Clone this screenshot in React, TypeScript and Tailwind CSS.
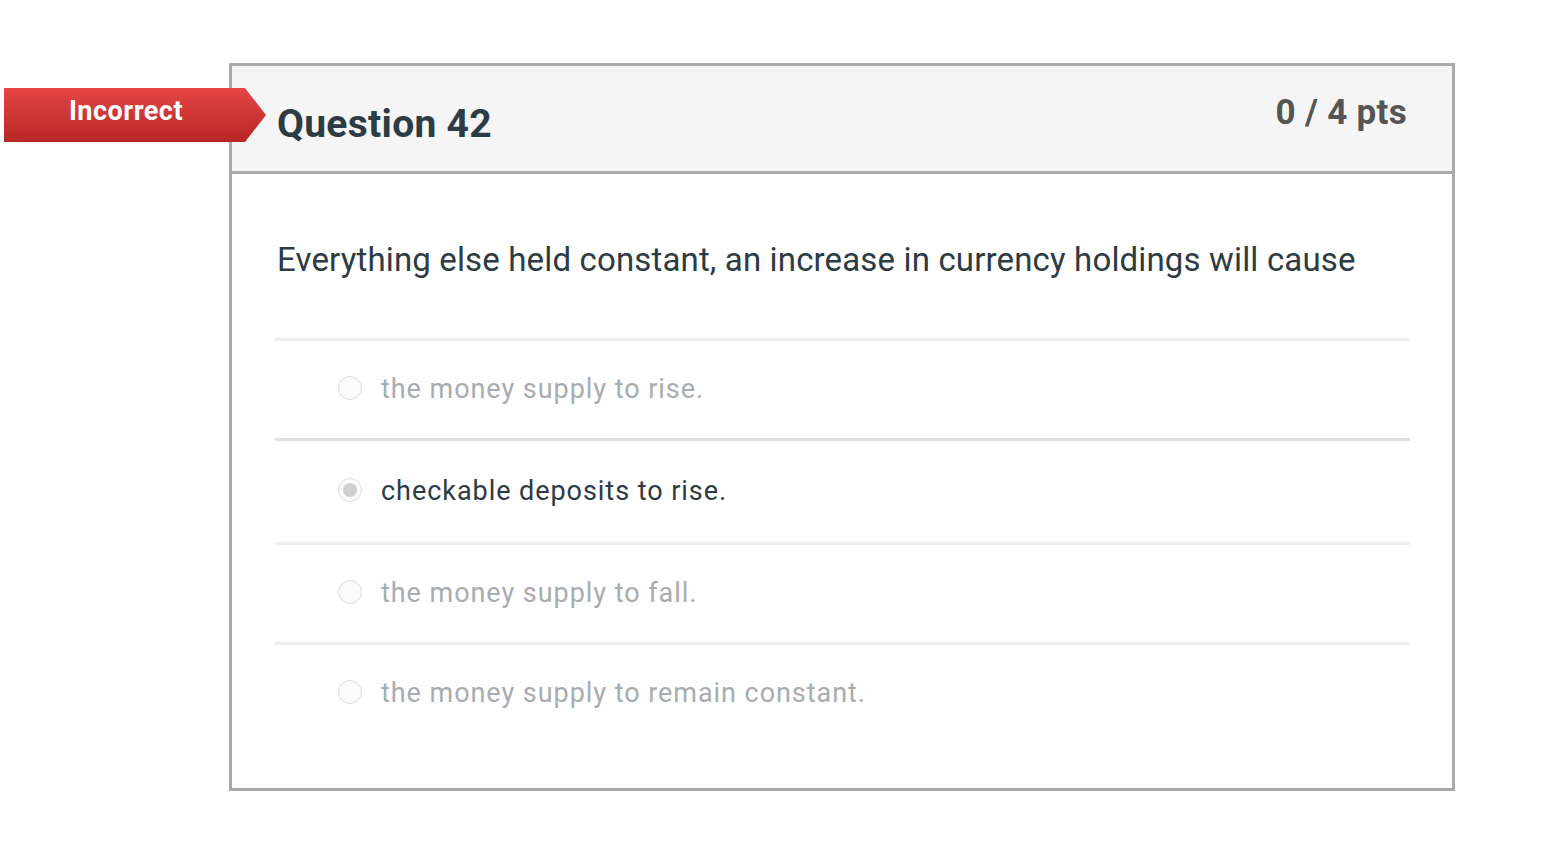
import React from "react";

type Answer = { text: string; selected?: boolean };

const answers: Answer[] = [
  { text: "the money supply to rise." },
  { text: "checkable deposits to rise.", selected: true },
  { text: "the money supply to fall." },
  { text: "the money supply to remain constant." },
];

function Radio({ selected }: { selected?: boolean }) {
  return (
    <span className="-mt-[4px] flex h-[24px] w-[24px] shrink-0 items-center justify-center rounded-full border border-[#dcdcdc] bg-[#fbfbfb]">
      {selected && <span className="h-[14px] w-[14px] rounded-full bg-[#cfcfcf]" />}
    </span>
  );
}

function IncorrectBadge() {
  return (
    <div className="absolute left-[-228px] top-[22px] flex h-[54px] items-center">
      <div className="flex h-full w-[241px] items-start justify-center bg-gradient-to-b from-[#e54545] to-[#b72525] pl-[3px] pt-[8px] text-[27px] font-bold leading-[30px] tracking-[0.5px] text-white">
        Incorrect
      </div>
      <svg width="21" height="54" viewBox="0 0 21 54" className="block">
        <defs>
          <linearGradient id="badgeGrad" x1="0" y1="0" x2="0" y2="1">
            <stop offset="0" stopColor="#e54545" />
            <stop offset="1" stopColor="#b72525" />
          </linearGradient>
        </defs>
        <polygon points="0,0 21,27 0,54" fill="url(#badgeGrad)" />
      </svg>
    </div>
  );
}

export default function App() {
  return (
    <div
      className="min-h-[848px] bg-white pl-[229px] pt-[63px]"
      style={{ fontFamily: "Roboto, 'Liberation Sans', sans-serif" }}
    >
      <div className="relative w-[1226px] border-[3px] border-[#aaaaaa] bg-white">
        <IncorrectBadge />
        {/* Header */}
        <div className="flex h-[108px] items-start justify-between border-b-[3px] border-[#aaaaaa] bg-[#f5f5f5] pl-[45px] pr-[45px]">
          <h2 className="mt-[39px] text-[39px] font-bold leading-none tracking-[0.3px] text-[#2d3b45]">Question 42</h2>
          <div className="mt-[29px] text-[35px] font-bold leading-none tracking-[0.3px] text-[#555555]">0 / 4 pts</div>
        </div>

        {/* Body */}
        <div className="pl-[43px] pr-[42px] pb-[46px] pt-[66px]">
          <p className="pl-[2px] text-[33px] leading-[40px] tracking-[0.15px] text-[#2d3b45]">
            Everything else held constant, an increase in currency holdings will cause
          </p>
          <div className="mt-[58px]">
            {answers.map((a, i) => (
              <div
                key={i}
                className={
                  "flex items-center gap-[19px] border-t-[3px] pl-[63px] " +
                  (i === 1 ? "h-[104px] border-[#e0e0e0]" : "h-[100px] border-[#eeeeee]")
                }
              >
                <Radio selected={a.selected} />
                <span
                  className={
                    "text-[27px] leading-none tracking-[0.95px] " +
                    (a.selected ? "text-[#2d3b45]" : "text-[#a8acb0]")
                  }
                >
                  {a.text}
                </span>
              </div>
            ))}
          </div>
        </div>
      </div>
    </div>
  );
}
